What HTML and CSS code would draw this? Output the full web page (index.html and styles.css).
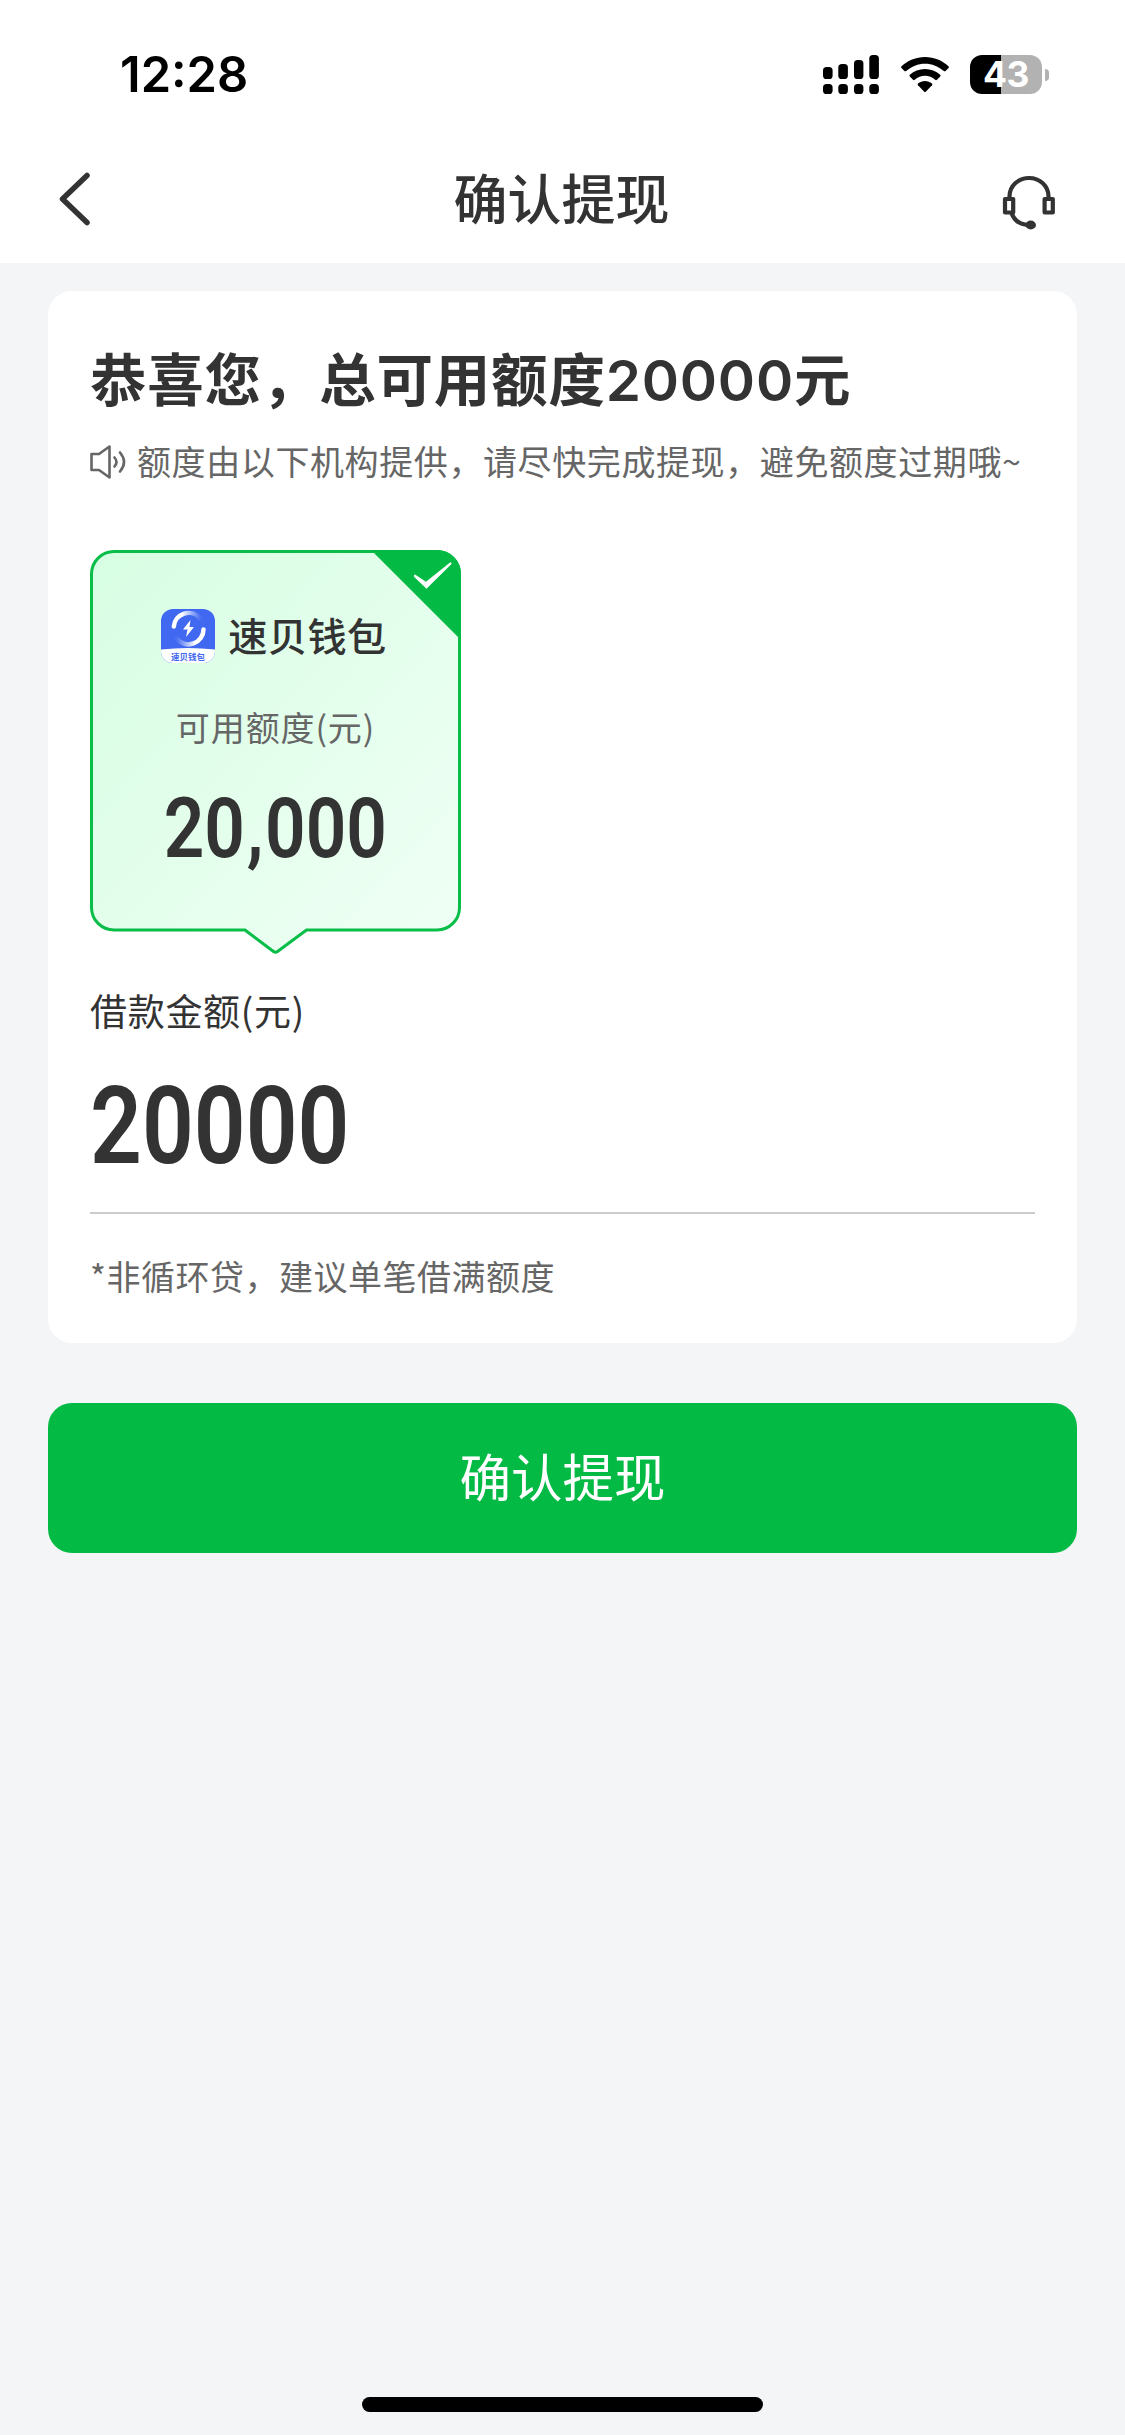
FILE: index.html
```html
<!DOCTYPE html>
<html lang="zh-CN">
<head>
<meta charset="utf-8">
<title>确认提现</title>
<link rel="stylesheet" href="styles.css">
</head>
<body>
<div class="screen">
  <header class="header">
    <div class="status">
      <time class="clock">12:28</time>
      <div class="status-icons">
        <svg class="signal" width="56" height="39" viewBox="0 0 56 39">
          <rect x="0" y="12" width="9.6" height="12" rx="3.6"/><rect x="15.3" y="9" width="9.6" height="15" rx="3.6"/><rect x="31" y="5" width="9.4" height="19" rx="3.6"/><rect x="46.3" y="0" width="9.6" height="24" rx="3.6"/>
          <rect x="0" y="29" width="9.6" height="10" rx="3.6"/><rect x="15.3" y="29" width="9.6" height="10" rx="3.6"/><rect x="31" y="29" width="9.4" height="10" rx="3.6"/><rect x="46.3" y="29" width="9.6" height="10" rx="3.6"/>
        </svg>
        <svg class="wifi" width="48" height="36" viewBox="0 0 48 36">
          <path d="M24 0C33 0 41.500 3.500 47.500 9.300Q48.300 10.200 47.500 11L44.600 14Q43.700 14.700 42.800 14C37.500 9.300 31 6.700 24 6.700S10.500 9.300 5.200 14Q4.300 14.700 3.400 14L.5 11Q-.3 10.200 .5 9.300C6.500 3.500 15 0 24 0Z"/>
          <path d="M24 12C29.800 12 35 14.200 39.200 17.800Q40 18.700 39.200 19.600L36 22.800Q35.100 23.500 34.200 22.800C31.300 20.200 27.800 18.700 24 18.700S16.700 20.200 13.800 22.800Q12.900 23.500 12 22.800L8.800 19.600Q8 18.700 8.800 17.800C13 14.200 18.200 12 24 12Z"/>
          <path d="M24 24C26.700 24 29 25 31 26.600Q31.700 27.400 31 28.200L25 34.500Q24 35.500 23 34.500L17 28.200Q16.300 27.400 17 26.600C19 25 21.300 24 24 24Z"/>
        </svg>
        <div class="battery">
          <div class="battery-body">43</div>
          <div class="battery-cap"></div>
        </div>
      </div>
    </div>
    <nav class="navbar">
      <svg class="back" width="34" height="56" viewBox="0 0 34 56"><path d="M29 4.500L4.500 28L29 51.500"/></svg>
      <h1 class="title">确认提现</h1>
      <svg class="service" width="56" height="56" viewBox="0 0 56 56">
        <path d="M8.500 24V22.500C8.500 12 17.200 4 28 4S47.500 12 47.500 22.500V24"/>
        <rect x="4" y="25" width="8.200" height="13.500"/><rect x="43.600" y="25" width="8.200" height="13.500"/>
        <path d="M10.500 39C13 46 19 50.500 27 51"/>
        <ellipse class="mic" cx="29.700" cy="51" rx="5.300" ry="4.400"/>
      </svg>
    </nav>
  </header>
  <main class="content">
    <section class="panel">
      <h2 class="headline">恭喜您，总可用额度<span class="headline-num">20000</span>元</h2>
      <p class="notice">
        <svg class="speaker" width="37" height="36" viewBox="0 0 37 36"><path d="M1.500 10H9L19.500 2.500V33.500L9 26H1.500Z"/><path d="M24.500 13.500Q28.500 18 24.500 22.500M30 8.500Q38 18 30 27.500"/></svg>
        <span>额度由以下机构提供，请尽快完成提现，避免额度过期哦~</span>
      </p>
      <div class="offer">
        <svg class="offer-frame" width="371" height="405" viewBox="0 0 371 405">
          <defs><linearGradient id="mint" x1="0" y1="0" x2="1" y2="1"><stop offset="0" stop-color="#d7fee3"/><stop offset="1" stop-color="#f0fff5"/></linearGradient></defs>
          <path class="bubble" d="M24 1.500H347A22.500 22.500 0 0 1 369.500 24V357.500A22.500 22.500 0 0 1 347 380H216.500L187.500 401.500Q185.500 403 183.500 401.500L155 380H24A22.500 22.500 0 0 1 1.500 357.500V24A22.500 22.500 0 0 1 24 1.500Z"/>
          <path class="corner" d="M281 0H347A24 24 0 0 1 371 24V90Z"/>
          <path class="tick" d="M325 24.500L336 31.700L360 12.500Q361.500 11.500 361.500 14L336.500 38.700L324.500 27.300Q323 25.500 325 24.500Z"/>
        </svg>
        <div class="offer-body">
          <div class="brand">
            <svg class="logo" width="54" height="54" viewBox="0 0 54 54">
              <defs>
                <clipPath id="tile"><rect width="54" height="54" rx="12"/></clipPath>
                <linearGradient id="fadeA" x1="0" x2="1"><stop offset=".3" stop-color="#fff"/><stop offset="1" stop-color="#fff" stop-opacity=".05"/></linearGradient>
                <linearGradient id="fadeB" x1="1" x2="0"><stop offset=".3" stop-color="#fff"/><stop offset="1" stop-color="#fff" stop-opacity=".05"/></linearGradient>
              </defs>
              <g clip-path="url(#tile)">
                <rect width="54" height="54" fill="#4168f0"/>
                <path d="M0 40.500Q27 37.500 54 40.500V54H0Z" fill="#fff"/>
                <path d="M12.800 17.500A15 15 0 0 1 39 9" fill="none" stroke="url(#fadeA)" stroke-width="4.500" stroke-linecap="round"/>
                <path d="M42.500 20.500A15 15 0 0 1 16 30" fill="none" stroke="url(#fadeB)" stroke-width="4.500" stroke-linecap="round"/>
                <path d="M29.500 11L22 20.500H26.500L25 28L33 18H28.500Z" fill="#fff"/>
                <text x="27" y="50.500" text-anchor="middle" class="logo-text">速贝钱包</text>
              </g>
            </svg>
            <span class="brand-name">速贝钱包</span>
          </div>
          <div class="offer-label">可用额度(元)</div>
          <div class="offer-amount"><span class="din">20<span class="comma">,</span>000</span></div>
        </div>
      </div>
      <div class="field-label">借款金额(元)</div>
      <div class="field-amount"><span class="din">20000</span></div>
      <p class="remark">*非循环贷，建议单笔借满额度</p>
    </section>
    <button class="submit">确认提现</button>
  </main>
  <div class="home-indicator"></div>
</div>
</body>
</html>
```
FILE: styles.css
```css
* { box-sizing: border-box; margin: 0; padding: 0; }
body { background: #f4f5f7; color: #333; font-family: "Noto Sans CJK SC", sans-serif; }
.screen { width: 1125px; height: 2435px; display: flex; flex-direction: column; overflow: hidden; }

.header { height: 263px; background: #fff; }
.status { height: 137px; padding: 55px 76px 0 120px; display: flex; justify-content: space-between; align-items: flex-start; }
.clock { font: 600 48.800px/40px Inter, sans-serif; color: #000; }
.status-icons { display: flex; align-items: flex-start; }
.wifi { margin: 2px 0 0 22px; }
.battery { display: flex; align-items: center; margin-left: 21px; }
.battery-body { width: 72px; height: 39px; border-radius: 12px; background: linear-gradient(90deg, #000 31px, #b2b2b2 31px); color: #fff; font: 700 35.500px/40px Inter, sans-serif; text-align: center; letter-spacing: -.5px; }
.battery-cap { width: 4px; height: 12px; margin-left: 3px; border-radius: 0 6px 6px 0; background: #b2b2b2; }

.navbar { height: 126px; padding: 0 68px 0 58px; display: flex; align-items: center; justify-content: space-between; }
.back { fill: none; stroke: #333; stroke-width: 5.500; stroke-linecap: round; stroke-linejoin: round; margin: 0 30px 2px 0; }
.title { font-size: 54px; line-height: 80px; font-weight: 500; margin-bottom: 6px; }
.service { fill: none; stroke: #333; stroke-width: 4.200; stroke-linejoin: round; margin-top: 3px; }
.mic { fill: #333; stroke: none; }

.content { padding: 28px 48px 0; }
.panel { height: 1052px; background: #fff; border-radius: 24px; padding: 45px 42px 0; }
.headline { height: 87px; font-size: 56.500px; line-height: 80px; letter-spacing: .8px; font-weight: 600; white-space: nowrap; }
.headline-num { font-family: Inter, sans-serif; line-height: 1; }
.notice { display: flex; align-items: center; height: 50px; margin-top: 14px; font-size: 34px; line-height: 48px; letter-spacing: .6px; color: #666; white-space: nowrap; }
.notice span { padding-bottom: 2px; }
.speaker { fill: none; stroke: #666; stroke-width: 2.600; stroke-linejoin: round; stroke-linecap: round; margin-right: 10px; }
.offer { width: 371px; height: 405px; margin-top: 63px; display: grid; }
.offer-frame, .offer-body { grid-area: 1 / 1; }
.bubble { fill: url(#mint); stroke: #08bd48; stroke-width: 3; }
.corner { fill: #02ba44; }
.tick { fill: #fff; }
.offer-body { display: flex; flex-direction: column; align-items: center; padding-top: 56px; }
.brand { display: flex; align-items: center; gap: 13px; height: 60px; margin-right: 3px; }
.brand-name { font-size: 39.200px; line-height: 56px; padding-bottom: 4px; letter-spacing: .4px; font-weight: 500; }
.logo-text { font-size: 8.500px; font-weight: 700; fill: #4168f0; }
.offer-label { margin-top: 36px; font-size: 34px; line-height: 50px; letter-spacing: .9px; color: #666; }
.din { display: inline-block; font-family: Roboto, sans-serif; font-weight: 600; transform: scaleX(.856); }
.comma { margin: 0 2px; }
.offer-amount { margin-top: 20px; font-size: 83px; line-height: 98px; }
.field-label { margin-top: 28px; font-size: 37px; line-height: 54px; letter-spacing: .7px; }
.field-amount { height: 177px; border-bottom: 2px solid #ccc; font-size: 107px; line-height: 160px; }
.field-amount .din { transform-origin: left; transform: scaleX(.849); }
.remark { margin-top: 37px; font-size: 34px; line-height: 50px; letter-spacing: .5px; color: #666; }
.submit { display: block; width: 1029px; height: 150px; margin-top: 60px; padding-bottom: 6px; border: 0; border-radius: 24px; background: #02ba44; color: #fff; font: 400 51.500px/76px "Noto Sans CJK SC", sans-serif; }
.home-indicator { width: 401px; height: 15px; border-radius: 8px; background: #000; margin: auto auto 23px; }
```
